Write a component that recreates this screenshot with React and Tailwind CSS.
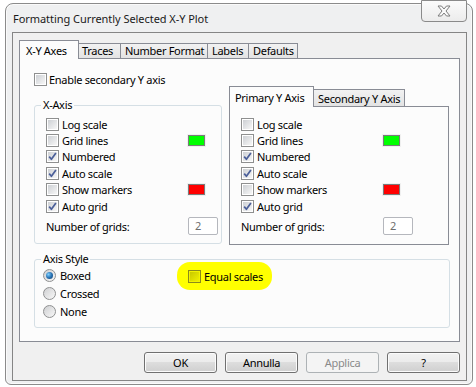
import React from "react";

function Check({ checked, tint }) {
  return (
    <div
      className={
        "relative w-[13px] h-[13px] shrink-0 border " +
        (tint ? "border-[#8a8a1c] bg-[#f2f200]" : "border-[#8e8f8f] bg-white")
      }
    >
      <div
        className={
          "absolute inset-[1px] " +
          (tint
            ? "bg-linear-to-br from-[#c8c800] to-[#f0f000]"
            : "bg-linear-to-br from-[#cdd0d4] to-[#f7f7f7]")
        }
      />
      {checked && (
        <svg className="absolute inset-0" width="11" height="11" viewBox="0 0 11 11">
          <path d="M2.2 5.6 L4.4 8.3 L8.9 1.9" fill="none" stroke="#4b5f99" strokeWidth="1.7" strokeLinejoin="round" />
        </svg>
      )}
    </div>
  );
}

function Radio({ checked }) {
  return (
    <div className="relative w-[13px] h-[13px] shrink-0 rounded-full border border-[#8f9091] bg-linear-to-br from-[#cfd0d2] to-[#f8f8f8]">
      {checked && (
        <div className="absolute left-[2px] top-[2px] w-[7px] h-[7px] rounded-full bg-radial-[at_35%_35%] from-[#7fd0ff] via-[#2a73b4] to-[#123f6c]" />
      )}
    </div>
  );
}

function Row({ label, checked, swatch }) {
  return (
    <div className="flex items-center h-[16.4px]">
      <div className="flex items-center w-[142px]">
        <Check checked={checked} />
        <span className="ml-[3px]">{label}</span>
      </div>
      {swatch && (
        <div className={"w-[17px] h-[11px] border border-[#7a7a7a] shadow-[0_0_0_1px_#f0f0f0] " + swatch} />
      )}
    </div>
  );
}

function AxisContent() {
  return (
    <div className="pl-[11px]">
      <Row label="Log scale" />
      <Row label="Grid lines" swatch="bg-[#00ff00]" />
      <Row label="Numbered" checked />
      <Row label="Auto scale" checked />
      <Row label="Show markers" swatch="bg-[#ff0000]" />
      <Row label="Auto grid" checked />
      <div className="flex items-center mt-[3px] h-[18px]">
        <div className="w-[142px]">Number of grids:</div>
        <div className="w-[30px] h-[18px] border border-[#b5b7bd] rounded-[2px] bg-white pl-[6px] text-[#6d6d6d] leading-[16px]">2</div>
      </div>
    </div>
  );
}

function Btn({ children, disabled }) {
  return (
    <div
      className={
        "w-[73px] h-[21px] rounded-[3px] border flex items-center justify-center " +
        (disabled
          ? "border-[#adb2b5] bg-[#f4f4f4] text-[#8a8a8a]"
          : "border-[#707070] bg-[linear-gradient(#f2f2f2_0%,#ebebeb_50%,#dddddd_50%,#cfcfcf_100%)] shadow-[inset_0_0_0_1px_#fbfbfb] text-black")
      }
    >
      {children}
    </div>
  );
}

export default function App() {
  return (
    <div className="w-[476px] h-[387px] bg-white overflow-hidden whitespace-nowrap font-['Noto_Sans',sans-serif] text-[11px] tracking-[-0.3px] leading-none text-black">
      <div className="relative ml-[5px] mt-[3px] w-[468px] h-[382px] border border-[#8b8b8b] rounded-t-[8px] rounded-b-[6px] bg-[#eff0f1] shadow-[inset_0_0_0_1px_#fafafa]">
        {/* close button */}
        <div className="absolute right-[5px] top-[-4px] w-[46px] h-[22px] border border-[#8a8a8a] rounded-b-[4px] bg-linear-to-b from-[#fbfbfb] to-[#ececec] flex items-center justify-center">
          <svg width="14" height="12" viewBox="0 0 14 12">
            <path
              d="M1 1 H4.5 L7 4 L9.5 1 H13 L9 6 L13 11 H9.5 L7 8 L4.5 11 H1 L5 6 Z"
              fill="#fafafa"
              stroke="#7d7d7d"
              strokeWidth="1"
              strokeLinejoin="round"
            />
          </svg>
        </div>

        {/* title */}
        <div className="h-[28px] pl-[7px] flex items-center pt-[1px] text-[11px] tracking-[-0.05px] text-[#1a1a1a]">
          Formatting Currently Selected X-Y Plot
        </div>

        {/* client */}
        <div className="ml-[6px] w-[455px] h-[349px] border border-[#858585] bg-[#f0f0f0]">
          {/* tabs */}
          <div className="ml-[6px] mt-[7px] h-[18px] flex items-end">
            <div className="relative z-10 w-[60px] h-[19px] -mb-px border border-b-0 border-[#898c95] bg-[#fcfcfc] pl-[6px] pt-[4px]">
              X-Y Axes
            </div>
            <div className="-ml-px w-[43px] h-[15px] border border-b-0 border-[#898c95] bg-linear-to-b from-[#f2f2f2] to-[#e3e3e3] pl-[3px] pt-[1px]">
              Traces
            </div>
            <div className="-ml-px w-[88px] h-[15px] border border-b-0 border-[#898c95] bg-linear-to-b from-[#f2f2f2] to-[#e3e3e3] pl-[4px] pt-[1px]">
              Number Format
            </div>
            <div className="-ml-px w-[42px] h-[15px] border border-b-0 border-[#898c95] bg-linear-to-b from-[#f2f2f2] to-[#e3e3e3] pl-[4px] pt-[1px]">
              Labels
            </div>
            <div className="-ml-px w-[50px] h-[15px] border border-b-0 border-[#898c95] bg-linear-to-b from-[#f2f2f2] to-[#e3e3e3] pl-[4px] pt-[1px]">
              Defaults
            </div>
          </div>

          {/* tab panel */}
          <div className="ml-[6px] w-[441px] h-[284px] border border-[#898c95] bg-[#fcfcfc]">
            <div className="ml-[14px] mt-[14px] flex items-center h-[13px]">
              <Check />
              <span className="ml-[2px]">Enable secondary Y axis</span>
            </div>

            <div className="ml-[14px] flex items-start">
              {/* X-Axis group */}
              <div className="relative mt-[19px] w-[188px] h-[139px] border border-[#d5dfe5] rounded-[3px]">
                <div className="absolute left-[6px] top-[-7px] px-[2px] bg-[#fcfcfc]">X-Axis</div>
                <div className="pt-[10px]">
                  <AxisContent />
                </div>
              </div>

              {/* right tab group */}
              <div className="ml-[7px] w-[220px]">
                <div className="h-[20px] flex items-end">
                  <div className="relative z-10 w-[85px] h-[21px] -mb-px border border-b-0 border-[#898c95] bg-[#fcfcfc] pl-[5px] pt-[5px]">
                    Primary Y Axis
                  </div>
                  <div className="-ml-px w-[92px] h-[17px] border border-b-0 border-[#898c95] bg-linear-to-b from-[#f2f2f2] to-[#e3e3e3] pl-[4px] pt-[3px]">
                    Secondary Y Axis
                  </div>
                </div>
                <div className="h-[139px] border border-[#898c95] bg-[#fcfcfc] pt-[9px]">
                  <AxisContent />
                </div>
              </div>
            </div>

            {/* Axis style */}
            <div className="relative ml-[14px] mt-[14px] w-[416px] h-[69px] border border-[#d5dfe5] rounded-[3px] flex items-start">
              <div className="absolute left-[6px] top-[-7px] px-[2px] bg-[#fcfcfc]">Axis Style</div>
              <div className="pl-[8px] pt-[6px] w-[142px]">
                <div className="flex items-center h-[18px]">
                  <Radio checked />
                  <span className="ml-[4px]">Boxed</span>
                </div>
                <div className="flex items-center h-[18px]">
                  <Radio />
                  <span className="ml-[4px]">Crossed</span>
                </div>
                <div className="flex items-center h-[18px]">
                  <Radio />
                  <span className="ml-[4px]">None</span>
                </div>
              </div>
              <div className="mt-[2px] w-[95px] h-[28px] rounded-[13px] bg-[#ffff00] flex items-center pl-[11px]">
                <Check tint />
                <span className="ml-[3px]">Equal scales</span>
              </div>
            </div>
          </div>

          {/* buttons */}
          <div className="mt-[10px] pr-[6px] flex justify-end gap-[8px]">
            <Btn>OK</Btn>
            <Btn>Annulla</Btn>
            <Btn disabled>Applica</Btn>
            <Btn>?</Btn>
          </div>
        </div>
      </div>
    </div>
  );
}
